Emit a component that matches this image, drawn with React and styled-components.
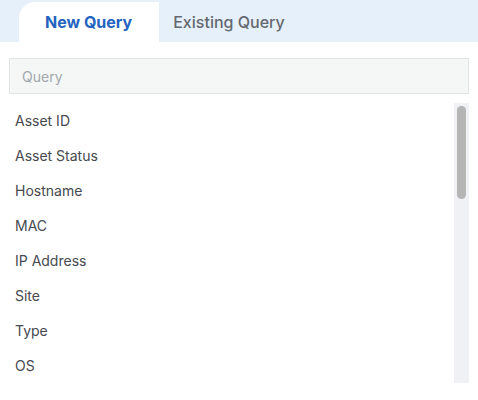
import React, { useState } from 'react';
import styled, { createGlobalStyle } from 'styled-components';

const GlobalStyle = createGlobalStyle`
    html, body {
        margin: 0;
        padding: 0;
        background: #ffffff;
        font-family: Inter, "Noto Sans", sans-serif;
    }
`;

const Panel = styled.div`
    width: 478px;
    display: flex;
    flex-direction: column;
`;

const TabBar = styled.div`
    display: flex;
    align-items: flex-end;
    height: 42px;
    padding-left: 19px;
    background: #e6f0fb;
    box-sizing: border-box;
`;

const Tab = styled.button`
    height: 40px;
    border: none;
    margin: 0;
    padding: ${(p) => (p.$active ? '0 27px 0 26px' : '0 14px')};
    font-family: inherit;
    font-size: 16px;
    font-weight: ${(p) => (p.$active ? 700 : 500)};
    color: ${(p) => (p.$active ? '#2563c0' : '#64686f')};
    background: ${(p) => (p.$active ? '#ffffff' : 'transparent')};
    border-top-left-radius: ${(p) => (p.$active ? '16px' : '0')};
    cursor: pointer;
`;

const Body = styled.div`
    display: flex;
    flex-direction: column;
    padding: 16px 9px 0;
    gap: 9px;
`;

const SearchInput = styled.input`
    height: 36px;
    box-sizing: border-box;
    border: 1px solid #e2e4e4;
    background: #f5f7f7;
    padding: 0 12px;
    font-family: inherit;
    font-size: 14px;
    color: #333;
    outline: none;
    &::placeholder {
        color: #a3a8ad;
    }
`;

const ListFrame = styled.div`
    display: flex;
    height: 280px;
`;

const List = styled.ul`
    flex: 1;
    list-style: none;
    margin: 0;
    padding: 0;
    overflow: hidden;
`;

const ScrollTrack = styled.div`
    width: 15px;
    background: #f0f1f4;
    padding: 3px;
    box-sizing: border-box;
`;

const ScrollThumb = styled.div`
    width: 9px;
    height: 93px;
    border-radius: 5px;
    background: #b5b5b5;
`;

const Item = styled.li`
    height: 35px;
    display: flex;
    align-items: center;
    padding-left: 6px;
    font-size: 14px;
    color: #46494e;
    cursor: pointer;
`;

const fields = [
    'Asset ID',
    'Asset Status',
    'Hostname',
    'MAC',
    'IP Address',
    'Site',
    'Type',
    'OS',
];

export default function App() {
    const [tab, setTab] = useState('new');
    return (
        <Panel>
            <GlobalStyle />
            <TabBar>
                <Tab $active={tab === 'new'} onClick={() => setTab('new')}>
                    New Query
                </Tab>
                <Tab $active={tab === 'existing'} onClick={() => setTab('existing')}>
                    Existing Query
                </Tab>
            </TabBar>
            <Body>
                <SearchInput placeholder="Query" />
                <ListFrame>
                    <List>
                        {fields.map((f) => (
                            <Item key={f}>{f}</Item>
                        ))}
                    </List>
                    <ScrollTrack>
                        <ScrollThumb />
                    </ScrollTrack>
                </ListFrame>
            </Body>
        </Panel>
    );
}
